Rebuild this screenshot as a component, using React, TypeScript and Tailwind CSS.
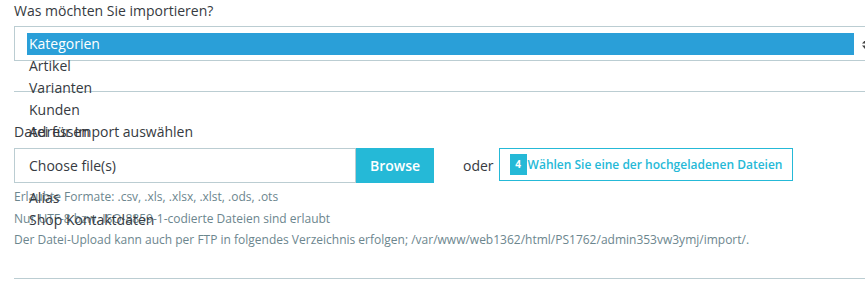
import React from "react";

const options = [
  "Kategorien",
  "Artikel",
  "Varianten",
  "Kunden",
  "Adressen",
  "Marken",
  "Lieferanten",
  "Alias",
  "Shop Kontaktdaten",
];

export default function App() {
  return (
    <div
      className="w-[865px] h-[292px] overflow-hidden bg-white text-[#363a41]"
      style={{ fontFamily: '"Open Sans", "Noto Sans", sans-serif' }}
    >
      <div className="pl-[14px]">
        <div className="pt-[1px] text-[14px] leading-[20px]">Was möchten Sie importieren?</div>
        <div className="relative mt-[5px] h-[35px] w-[880px] border border-[#bbcdd2] pl-[12px] pt-[6px]">
          <div className="w-[827px] shrink-0 text-[14px] leading-[22px]">
            {options.map((o, i) => (
              <div
                key={o}
                className={
                  i === 0
                    ? "h-[22px] w-[827px] bg-[#2a9fd8] pl-[2px] text-white"
                    : "h-[22px] pl-[2px] text-[#363a41]"
                }
              >
                {o}
              </div>
            ))}
          </div>
          <svg
            className="absolute left-[847px] top-[12px]"
            width="8"
            height="11"
            viewBox="0 0 8 11"
          >
            <path d="M4 0 L8 4.5 H0 Z" fill="#444" />
            <path d="M4 11 L8 6.5 H0 Z" fill="#444" />
          </svg>
        </div>
        <div className="mt-[30px] h-px w-[860px] bg-[#bbcdd2]" />
        <div className="mt-[30px] text-[14px] leading-[20px]">Datei für Import auswählen</div>
        <div className="relative z-10 mt-[6px] flex h-[35px] items-stretch">
          <div className="flex w-[342px] items-center border border-[#bbcdd2] bg-white pl-[14px] text-[14px] text-[#363a41]">
            Choose file(s)
          </div>
          <div className="flex w-[78px] items-center justify-center bg-[#25b9d7] text-[14px] font-semibold text-white">
            Browse
          </div>
          <div className="ml-[29px] mr-[5px] flex items-center text-[14px] text-[#363a41]">oder</div>
          <div className="flex h-[33px] w-[294px] items-center border border-[#25b9d7] bg-white pl-[10px]">
            <span className="flex h-[21px] w-[17px] items-center justify-center bg-[#25b9d7] text-[10px] font-bold text-white">
              4
            </span>
            <span className="ml-px text-[12px] font-semibold text-[#25b9d7]">
              Wählen Sie eine der hochgeladenen Dateien
            </span>
          </div>
        </div>
        <div className="mt-[3px] text-[12px] leading-[21.5px] text-[#6c868e]">
          <p>Erlaubte Formate: .csv, .xls, .xlsx, .xlst, .ods, .ots</p>
          <p>Nur UTF-8 bzw. ISO-8859-1-codierte Dateien sind erlaubt</p>
          <p>
            Der Datei-Upload kann auch per FTP in folgendes Verzeichnis erfolgen; /var/www/web1362/html/PS1762/admin353vw3ymj/import/.
          </p>
        </div>
        <div className="mt-[27px] h-px w-[860px] bg-[#bbcdd2]" />
      </div>
    </div>
  );
}
